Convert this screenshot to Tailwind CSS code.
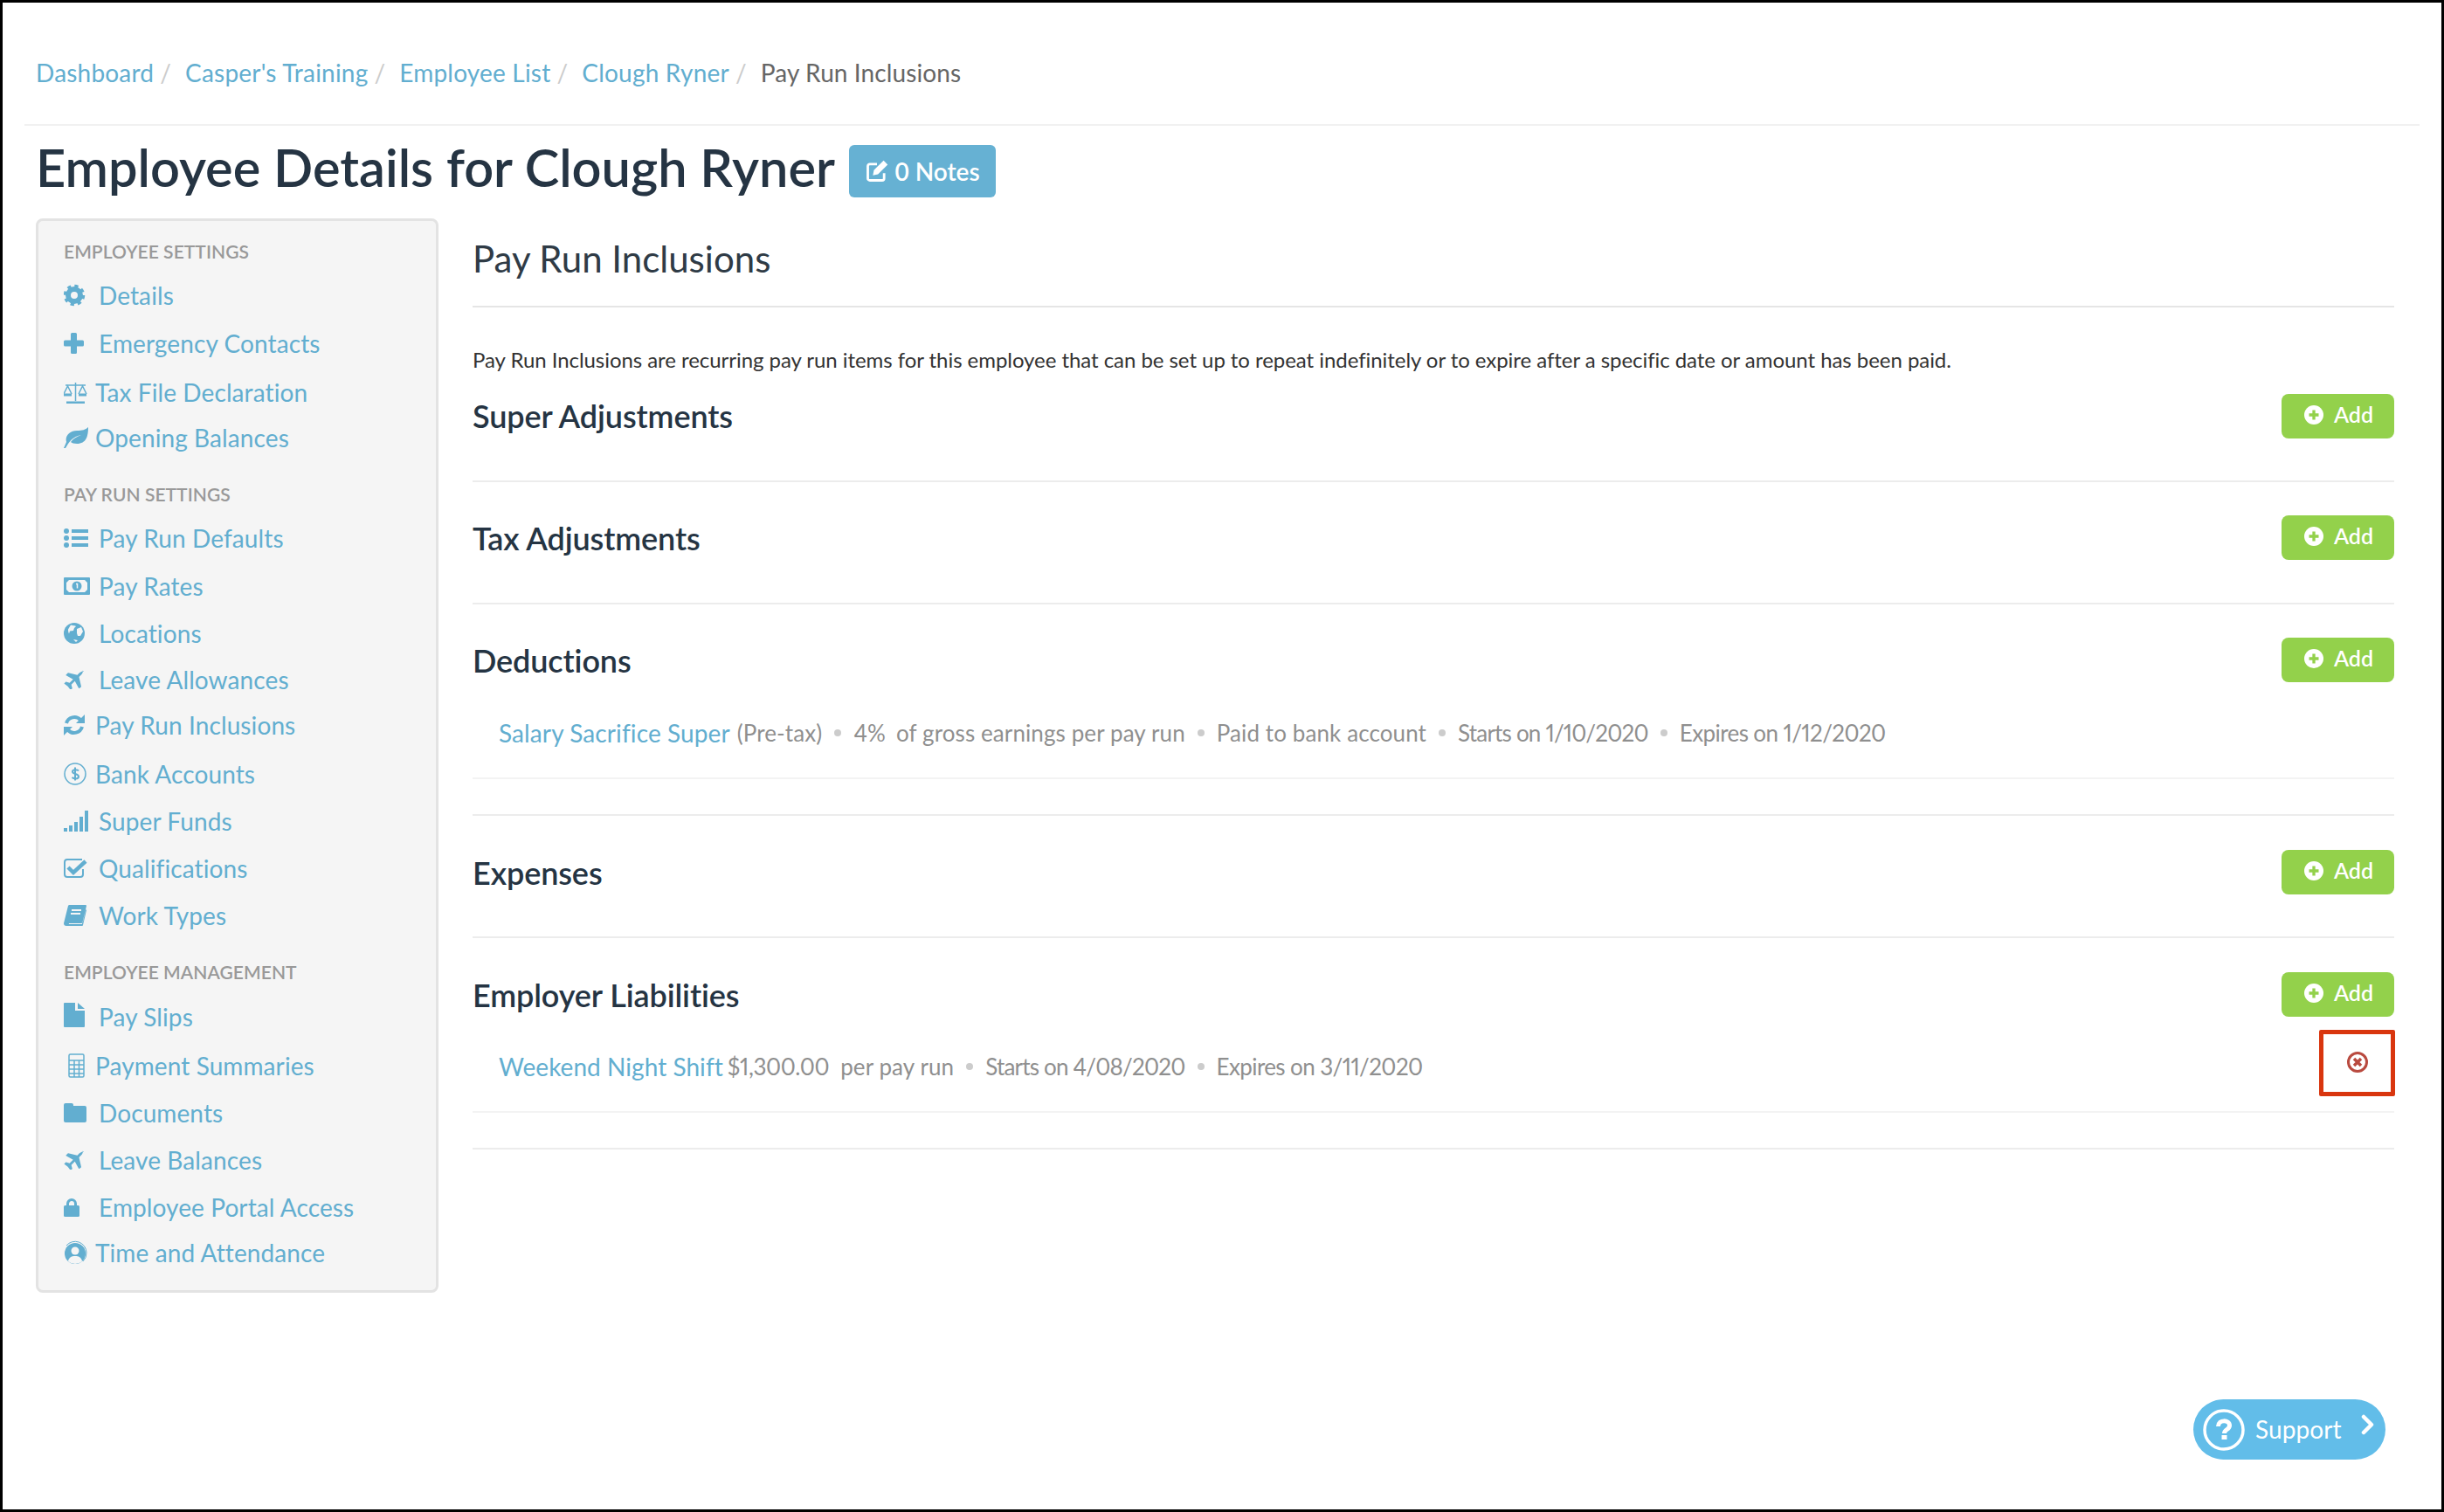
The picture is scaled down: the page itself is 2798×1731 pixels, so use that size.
<!DOCTYPE html>
<html lang="en">
<head>
    <meta charset="UTF-8">
    <title>Employee Details for Clough Ryner</title>
    <script src="https://cdn.jsdelivr.net/npm/@tailwindcss/browser@4"></script>
</head>
<body class="bg-white font-[Lato,sans-serif]">
<div class="relative h-[1731px] w-[2798px] overflow-hidden border-x-[3px] border-y-[3px] border-black bg-white">

    <!-- Breadcrumb -->
    <div class="flex h-[139px] items-center pl-[38px] pt-[21px] text-[28px] tracking-[0.2px] text-[#62aed0]">
        <a>Dashboard</a><span class="ml-[7px] mr-[16px] text-[#ccc]">/</span>
        <a>Casper's Training</a><span class="ml-[7px] mr-[16px] text-[#ccc]">/</span>
        <a>Employee List</a><span class="ml-[7px] mr-[16px] text-[#ccc]">/</span>
        <a>Clough Ryner</a><span class="ml-[7px] mr-[16px] text-[#ccc]">/</span>
        <span class="tracking-[0.1px] text-[#666]">Pay Run Inclusions</span>
    </div>
    <div class="ml-[25px] mr-[25px] h-[2px] bg-[#f1f1f1]"></div>

    <!-- Title -->
    <div class="flex h-[106px] items-center pb-[10px] pl-[38px]">
        <h1 class="text-[59.5px] font-semibold text-[#253443]">Employee Details for Clough Ryner</h1>
        <button class="ml-[16px] mt-[8px] flex h-[60px] w-[168px] items-center justify-center gap-[6px] rounded-[6px] bg-[#66b1d3] text-[28px] font-semibold text-white">
            <svg class="h-[28px] w-[28px]" viewBox="0 0 24 24" fill="none" stroke="currentColor" stroke-width="2.400"><path d="M19 14v5a2 2 0 0 1-2 2H5a2 2 0 0 1-2-2V7a2 2 0 0 1 2-2h7"/><path d="M8 16l1-5 9.500-9.500 4 4L13 15z" fill="currentColor" stroke="none"/></svg>
            0 Notes
        </button>
    </div>

    <div class="flex items-start gap-[39px] pl-[38px]">
        <!-- Sidebar -->
        <div class="w-[461px] rounded-[8px] border-[3px] border-[#e3e3e3] bg-[#f5f5f5] pb-[16px] pl-[29px] pt-[20px] text-[28px] tracking-[0.1px] text-[#62aed0]">
            <div class="mb-[8px] flex h-[30px] items-center text-[21px] font-semibold tracking-[0.05px] text-[#999]">EMPLOYEE SETTINGS</div>

            <div class="flex h-[54px] items-center">
                <svg class="w-[40px] shrink-0 h-[26px]" viewBox="0 0 40 26"><g fill="none" stroke="currentColor"><circle cx="12" cy="13" r="7" stroke-width="6"/><circle cx="12" cy="13" r="10.500" stroke-width="3.500" stroke-dasharray="4.200 4.050"/></g></svg>
                <span>Details</span>
            </div>
            <div class="mt-px flex h-[54px] items-center">
                <svg class="w-[40px] shrink-0 h-[24px]" viewBox="0 0 40 24" fill="currentColor"><path d="M8 1.500a1.500 1.500 0 0 1 1.500-1.500h4A1.500 1.500 0 0 1 15 1.500V8.500h6.500A1.500 1.500 0 0 1 23 10v4a1.500 1.500 0 0 1-1.500 1.500H15v7A1.500 1.500 0 0 1 13.500 24h-4A1.500 1.500 0 0 1 8 22.500v-7H1.500A1.500 1.500 0 0 1 0 14v-4a1.500 1.500 0 0 1 1.500-1.500H8z"/></svg>
                <span>Emergency Contacts</span>
            </div>
            <div class="mt-[2px] flex h-[54px] items-center">
                <svg class="w-[36px] shrink-0 h-[26px]" viewBox="0 0 36 26" fill="none" stroke="currentColor" stroke-width="1.500"><path d="M2 5h23M13.500 2v21"/><path d="M3 25h21" stroke-width="3"/><path d="M0 15l4.500-9 4.500 9M17 15l4.500-9 4.500 9"/><path d="M0 16h9M17 16h9" stroke-width="3"/></svg>
                <span>Tax File Declaration</span>
            </div>
            <div class="-mt-[2px] flex h-[54px] items-center">
                <svg class="w-[36px] shrink-0 h-[24px]" viewBox="0 0 36 24" fill="currentColor"><path d="M28 0c0 10-2 19-13 19-3 0-6-1-7-2 3-4 7-6 12-8-6 1-11 4-15 10l-3 5H0l3-7C1 10 7 4 15 4c6 0 10-1 13-4z"/></svg>
                <span>Opening Balances</span>
            </div>

            <div class="mb-[8px] mt-[23px] flex h-[30px] items-center text-[21px] font-semibold tracking-[0.05px] text-[#999]">PAY RUN SETTINGS</div>

            <div class="flex h-[54px] items-center">
                <svg class="w-[40px] shrink-0 h-[22px]" viewBox="0 0 40 22" fill="currentColor"><circle cx="3" cy="3" r="3"/><circle cx="3" cy="11" r="3"/><circle cx="3" cy="19" r="3"/><rect x="9" y="1" width="19" height="4"/><rect x="9" y="9" width="19" height="4"/><rect x="9" y="17" width="19" height="4"/></svg>
                <span>Pay Run Defaults</span>
            </div>
            <div class="mt-px flex h-[54px] items-center">
                <svg class="w-[40px] shrink-0 h-[20px]" viewBox="0 0 40 20"><path fill="currentColor" fill-rule="evenodd" d="M0 1a1 1 0 0 1 1-1h28a1 1 0 0 1 1 1v18a1 1 0 0 1-1 1H1a1 1 0 0 1-1-1zM6 3 3 6v8l3 3h18l3-3V6l-3-3z"/><circle cx="15" cy="10" r="5.500" fill="currentColor"/><path d="M14 7.500h1.500v5" stroke="#f5f5f5" stroke-width="1.500" fill="none"/></svg>
                <span>Pay Rates</span>
            </div>
            <div class="flex h-[54px] items-center">
                <svg class="w-[40px] shrink-0 h-[24px]" viewBox="0 0 40 24"><circle cx="12" cy="12" r="12" fill="currentColor"/><path fill="#f5f5f5" d="M8 2.500c3 1 5 .5 6 1.500l-2 2-1 3-4 .5-1 3c-1-2-1-4-1-5zM15 7l5-2 2 5-3 5h-3l-1-3zM11 19l5 1-2 2z"/></svg>
                <span>Locations</span>
            </div>
            <div class="-mt-px flex h-[54px] items-center">
                <svg class="w-[40px] shrink-0 h-[22px]" viewBox="0 128 2560 1408" preserveAspectRatio="xMinYMid" fill="currentColor"><path d="M1376 160q44 52 12 148t-108 172l-161 161 160 696q5 19-12 33l-128 96q-7 6-19 6-4 0-7-1-15-3-21-16l-279-508-259 259 71 260q3 11-5 21l-96 96q-7 7-18 7-13 0-21-9l-189-252-252-189q-9-6-9-21-1-12 7-20l96-96q8-8 20-8 4 0 7 1l260 71 259-259-508-279q-14-8-17-24-2-16 9-27l128-128q14-13 30-8l665 159 160-160q76-76 172-108t148 12z"/></svg>
                <span>Leave Allowances</span>
            </div>
            <div class="-mt-[2px] flex h-[54px] items-center">
                <svg class="w-[36px] shrink-0 h-[24px]" viewBox="0 0 36 24" fill="none" stroke="currentColor" stroke-width="4"><path d="M3 10a9.500 9.500 0 0 1 16-4"/><path d="M21 14a9.500 9.500 0 0 1-16 4"/><path d="M24 0v10h-10z" fill="currentColor" stroke="none"/><path d="M0 24v-10h10z" fill="currentColor" stroke="none"/></svg>
                <span>Pay Run Inclusions</span>
            </div>
            <div class="mt-[2px] flex h-[54px] items-center">
                <svg class="w-[36px] shrink-0 h-[26px]" viewBox="0 0 36 26" fill="none" stroke="currentColor" stroke-width="1.500"><circle cx="13" cy="13" r="12"/><path d="M17 9.500c-1-1.500-7-2-7 1s7 2 7 5.500-6 2.500-7.500 1M13 5.500v15" stroke-width="2"/></svg>
                <span>Bank Accounts</span>
            </div>
            <div class="flex h-[54px] items-center">
                <svg class="w-[40px] shrink-0 h-[24px]" viewBox="0 0 40 24" fill="currentColor"><rect x="0" y="20" width="4" height="4"/><rect x="6" y="17" width="4" height="7"/><rect x="12" y="13" width="4" height="11"/><rect x="18" y="7" width="4" height="17"/><rect x="24" y="0" width="4" height="24"/></svg>
                <span>Super Funds</span>
            </div>
            <div class="flex h-[54px] items-center">
                <svg class="w-[40px] shrink-0 h-[22px]" viewBox="0 0 40 22" fill="none" stroke="currentColor"><path d="M22 12v6a3 3 0 0 1-3 3H4a3 3 0 0 1-3-3V4a3 3 0 0 1 3-3h17" stroke-width="2"/><path d="M5 10l6 6L25 3" stroke-width="4.500"/></svg>
                <span>Qualifications</span>
            </div>
            <div class="flex h-[54px] items-center">
                <svg class="w-[40px] shrink-0 h-[24px]" viewBox="0 0 40 24" fill="currentColor"><path d="M5 1a2 2 0 0 1 2-1h18a1 1 0 0 1 1 1l-4 18a2 2 0 0 1-2 2H6a1 1 0 0 0 0 1h15l4-17 1 1-4 17a1 1 0 0 1-1 1H3a3 3 0 0 1-3-3zM9 5v2h11V5zM8 9v2h11V9z" fill-rule="evenodd"/></svg>
                <span>Work Types</span>
            </div>

            <div class="mb-[9px] mt-[23px] flex h-[30px] items-center text-[21px] font-semibold tracking-[0.05px] text-[#999]">EMPLOYEE MANAGEMENT</div>

            <div class="flex h-[54px] items-center">
                <svg class="w-[40px] shrink-0 h-[28px] -translate-y-[2px]" viewBox="0 0 40 28" fill="currentColor"><path d="M1 0h12v9h11v18a1 1 0 0 1-1 1H1a1 1 0 0 1-1-1V1a1 1 0 0 1 1-1z"/><path d="M16 0l8 7h-8z"/></svg>
                <span>Pay Slips</span>
            </div>
            <div class="mt-[2px] flex h-[54px] items-center">
                <svg class="w-[36px] shrink-0 h-[28px]" viewBox="0 0 36 28" fill="none" stroke="currentColor" stroke-width="1.500"><rect x="6" y="1" width="17" height="26" rx="1.500"/><path d="M6 8h17M6 13h17M6 18h17M6 23h17M12 8v19M17.500 8v19"/></svg>
                <span>Payment Summaries</span>
            </div>
            <div class="flex h-[54px] items-center">
                <svg class="w-[40px] shrink-0 h-[22px]" viewBox="0 0 40 22" fill="currentColor"><path d="M2 0h7a2 2 0 0 1 2 2v1h13a2 2 0 0 1 2 2v15a2 2 0 0 1-2 2H2a2 2 0 0 1-2-2V2a2 2 0 0 1 2-2z"/></svg>
                <span>Documents</span>
            </div>
            <div class="flex h-[54px] items-center">
                <svg class="w-[40px] shrink-0 h-[22px]" viewBox="0 128 2560 1408" preserveAspectRatio="xMinYMid" fill="currentColor"><path d="M1376 160q44 52 12 148t-108 172l-161 161 160 696q5 19-12 33l-128 96q-7 6-19 6-4 0-7-1-15-3-21-16l-279-508-259 259 71 260q3 11-5 21l-96 96q-7 7-18 7-13 0-21-9l-189-252-252-189q-9-6-9-21-1-12 7-20l96-96q8-8 20-8 4 0 7 1l260 71 259-259-508-279q-14-8-17-24-2-16 9-27l128-128q14-13 30-8l665 159 160-160q76-76 172-108t148 12z"/></svg>
                <span>Leave Balances</span>
            </div>
            <div class="flex h-[54px] items-center">
                <svg class="w-[40px] shrink-0 h-[24px]" viewBox="0 0 40 24"><path fill="none" stroke="currentColor" stroke-width="3" d="M4.500 11V8a4.500 4.500 0 0 1 9 0v3"/><rect x="0" y="10" width="18" height="13" rx="1.500" fill="currentColor"/></svg>
                <span>Employee Portal Access</span>
            </div>
            <div class="-mt-[2px] flex h-[54px] items-center">
                <svg class="w-[36px] shrink-0 h-[28px]" viewBox="0 0 36 28"><circle cx="13" cy="15" r="12" fill="currentColor"/><circle cx="13" cy="12" r="4.500" fill="#f5f5f5"/><path d="M5 24c1-5 4-6 8-6s7 1 8 6a12 12 0 0 1-16 0z" fill="#f5f5f5"/><path d="M3 6a13 13 0 0 1 23 8 13 13 0 0 1-4 10" fill="none" stroke="currentColor" stroke-width="1"/></svg>
                <span>Time and Attendance</span>
            </div>
        </div>

        <!-- Main column -->
        <div class="w-[2200px] pt-[16px]">
            <h2 class="mb-[24px] flex h-[60px] items-center text-[42px] text-[#2f3b46]">Pay Run Inclusions</h2>
            <div class="h-[2px] bg-[#e5e5e5]"></div>
            <p class="mt-[42px] flex h-[36px] items-center text-[24px] tracking-[-0.05px] text-[#333]">Pay Run Inclusions are recurring pay run items for this employee that can be set up to repeat indefinitely or to expire after a specific date or amount has been paid.</p>

            <!-- Super Adjustments -->
            <div class="border-b-2 border-[#ececec] pb-[48px] pt-[21px]">
                <div class="flex h-[51px] items-center justify-between">
                    <h3 class="-mt-[2px] text-[36px] font-semibold tracking-[-0.1px] text-[#253443]">Super Adjustments</h3>
                    <button class="flex h-[51px] w-[129px] items-center justify-center gap-[12px] rounded-[8px] bg-[#93d14b] pb-[4px] pl-[2px] text-[25px] font-semibold text-white">
                        <svg class="h-[22px] w-[22px]" viewBox="0 0 20 20"><circle cx="10" cy="10" r="10" fill="currentColor"/><path d="M10 5v10M5 10h10" stroke="#93d14b" stroke-width="3"/></svg>
                        Add
                    </button>
                </div>
            </div>

            <!-- Tax Adjustments -->
            <div class="border-b-2 border-[#ececec] pb-[49px] pt-[38px]">
                <div class="flex h-[51px] items-center justify-between">
                    <h3 class="text-[36px] font-semibold tracking-[-0.1px] text-[#253443]">Tax Adjustments</h3>
                    <button class="flex h-[51px] w-[129px] items-center justify-center gap-[12px] rounded-[8px] bg-[#93d14b] pb-[4px] pl-[2px] text-[25px] font-semibold text-white">
                        <svg class="h-[22px] w-[22px]" viewBox="0 0 20 20"><circle cx="10" cy="10" r="10" fill="currentColor"/><path d="M10 5v10M5 10h10" stroke="#93d14b" stroke-width="3"/></svg>
                        Add
                    </button>
                </div>
            </div>

            <!-- Deductions -->
            <div class="border-b-2 border-[#ececec] pb-[40px] pt-[38px]">
                <div class="flex h-[51px] items-center justify-between">
                    <h3 class="text-[36px] font-semibold tracking-[-0.1px] text-[#253443]">Deductions</h3>
                    <button class="flex h-[51px] w-[129px] items-center justify-center gap-[12px] rounded-[8px] bg-[#93d14b] pb-[4px] pl-[2px] text-[25px] font-semibold text-white">
                        <svg class="h-[22px] w-[22px]" viewBox="0 0 20 20"><circle cx="10" cy="10" r="10" fill="currentColor"/><path d="M10 5v10M5 10h10" stroke="#93d14b" stroke-width="3"/></svg>
                        Add
                    </button>
                </div>
                <div class="mt-[38px] flex h-[40px] items-center pl-[30px] text-[26px] tracking-[0.1px] text-[#8f8f8f] proportional-nums">
                    <a class="text-[28px] tracking-[0.1px] text-[#62aed0]">Salary Sacrifice Super</a>
                    <span class="ml-[8px]">(Pre-tax)</span>
                    <span class="mx-[14px] h-[8px] w-[8px] rounded-full bg-[#ccc]"></span>
                    <span>4%</span>
                    <span class="ml-[12px]">of gross earnings per pay run</span>
                    <span class="mx-[14px] h-[8px] w-[8px] rounded-full bg-[#ccc]"></span>
                    <span>Paid to bank account</span>
                    <span class="mx-[14px] h-[8px] w-[8px] rounded-full bg-[#ccc]"></span>
                    <span class="tracking-[-0.8px]">Starts on 1/10/2020</span>
                    <span class="mx-[14px] h-[8px] w-[8px] rounded-full bg-[#ccc]"></span>
                    <span class="tracking-[-0.6px]">Expires on 1/12/2020</span>
                </div>
                <div class="mt-[31px] h-[2px] bg-[#f3f3f3]"></div>
            </div>

            <!-- Expenses -->
            <div class="border-b-2 border-[#ececec] pb-[48px] pt-[39px]">
                <div class="flex h-[51px] items-center justify-between">
                    <h3 class="text-[36px] font-semibold tracking-[-0.1px] text-[#253443]">Expenses</h3>
                    <button class="flex h-[51px] w-[129px] items-center justify-center gap-[12px] rounded-[8px] bg-[#93d14b] pb-[4px] pl-[2px] text-[25px] font-semibold text-white">
                        <svg class="h-[22px] w-[22px]" viewBox="0 0 20 20"><circle cx="10" cy="10" r="10" fill="currentColor"/><path d="M10 5v10M5 10h10" stroke="#93d14b" stroke-width="3"/></svg>
                        Add
                    </button>
                </div>
            </div>

            <!-- Employer Liabilities -->
            <div class="relative border-b-2 border-[#ececec] pb-[40px] pt-[39px]">
                <div class="flex h-[51px] items-center justify-between">
                    <h3 class="text-[36px] font-semibold tracking-[-0.1px] text-[#253443]">Employer Liabilities</h3>
                    <button class="flex h-[51px] w-[129px] items-center justify-center gap-[12px] rounded-[8px] bg-[#93d14b] pb-[4px] pl-[2px] text-[25px] font-semibold text-white">
                        <svg class="h-[22px] w-[22px]" viewBox="0 0 20 20"><circle cx="10" cy="10" r="10" fill="currentColor"/><path d="M10 5v10M5 10h10" stroke="#93d14b" stroke-width="3"/></svg>
                        Add
                    </button>
                </div>
                <div class="mt-[37px] flex h-[40px] items-center pl-[30px] text-[26px] tracking-[0.1px] text-[#8f8f8f] proportional-nums">
                    <a class="text-[28px] tracking-[0.05px] text-[#62aed0]">Weekend Night Shift</a>
                    <span class="ml-[5px] tracking-[-0.4px]">$1,300.00</span>
                    <span class="ml-[13px]">per pay run</span>
                    <span class="mx-[14px] h-[8px] w-[8px] rounded-full bg-[#ccc]"></span>
                    <span class="tracking-[-0.8px]">Starts on 4/08/2020</span>
                    <span class="mx-[14px] h-[8px] w-[8px] rounded-full bg-[#ccc]"></span>
                    <span class="tracking-[-0.6px]">Expires on 3/11/2020</span>
                </div>
                <div class="mt-[31px] h-[2px] bg-[#f3f3f3]"></div>

                <!-- red highlight around the remove icon -->
                <div class="absolute right-[-1px] top-[105px] flex h-[76px] w-[87px] items-center justify-center rounded-[2px] border-[5px] border-[#d9360f]">
                    <svg class="-mt-[2px] h-[24px] w-[24px] text-[#b94a3f]" viewBox="0 0 24 24" fill="none" stroke="currentColor"><circle cx="12" cy="12" r="10.500" stroke-width="3"/><path d="M8 8l8 8M16 8l-8 8" stroke-width="3.500"/></svg>
                </div>
            </div>
        </div>
    </div>

    <!-- Support widget -->
    <div class="absolute bottom-[57px] right-[64px] flex h-[69px] w-[220px] items-center rounded-full bg-[#62bde9] pl-[11px] text-white">
        <svg class="h-[48px] w-[48px] shrink-0" viewBox="0 0 48 48" fill="none" stroke="currentColor"><circle cx="24" cy="24" r="22" stroke-width="3.500"/><path d="M17.500 20c0-8 13-8 13-1 0 5-6 4-6 9" stroke-width="5"/><rect x="21.500" y="30" width="6" height="5" fill="currentColor" stroke="none"/></svg>
        <span class="-mt-[2px] ml-[12px] text-[28px] tracking-[0.1px]">Support</span>
        <svg class="-mt-[12px] ml-[22px] h-[24px] w-[16px]" viewBox="0 0 16 24" fill="none" stroke="currentColor" stroke-width="4.500" stroke-linecap="round" stroke-linejoin="round"><path d="M3 3l9 9-9 9"/></svg>
    </div>
</div>
</body>
</html>
